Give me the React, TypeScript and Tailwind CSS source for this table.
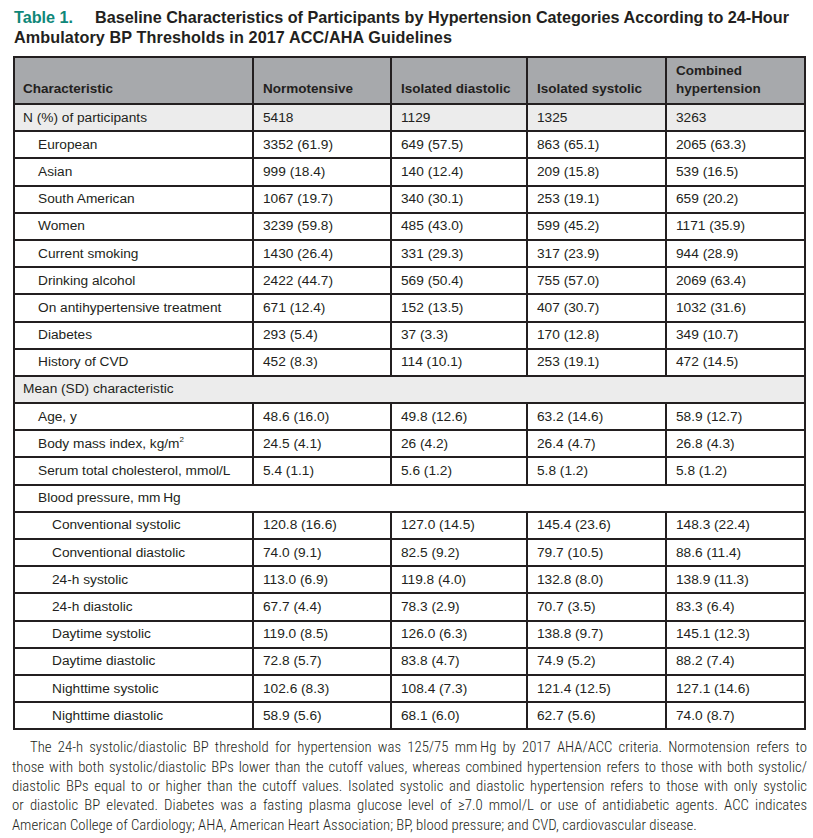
import React from "react";

type Row =
  | { kind: "data"; label: string; level: 0 | 1 | 2; vals: string[]; shade?: boolean }
  | { kind: "span"; label: string; level: 0 | 1 | 2; shade?: boolean };

const rows: Row[] = [
  { kind: "data", label: "N (%) of participants", level: 0, vals: ["5418", "1129", "1325", "3263"], shade: true },
  { kind: "data", label: "European", level: 1, vals: ["3352 (61.9)", "649 (57.5)", "863 (65.1)", "2065 (63.3)"] },
  { kind: "data", label: "Asian", level: 1, vals: ["999 (18.4)", "140 (12.4)", "209 (15.8)", "539 (16.5)"] },
  { kind: "data", label: "South American", level: 1, vals: ["1067 (19.7)", "340 (30.1)", "253 (19.1)", "659 (20.2)"] },
  { kind: "data", label: "Women", level: 1, vals: ["3239 (59.8)", "485 (43.0)", "599 (45.2)", "1171 (35.9)"] },
  { kind: "data", label: "Current smoking", level: 1, vals: ["1430 (26.4)", "331 (29.3)", "317 (23.9)", "944 (28.9)"] },
  { kind: "data", label: "Drinking alcohol", level: 1, vals: ["2422 (44.7)", "569 (50.4)", "755 (57.0)", "2069 (63.4)"] },
  { kind: "data", label: "On antihypertensive treatment", level: 1, vals: ["671 (12.4)", "152 (13.5)", "407 (30.7)", "1032 (31.6)"] },
  { kind: "data", label: "Diabetes", level: 1, vals: ["293 (5.4)", "37 (3.3)", "170 (12.8)", "349 (10.7)"] },
  { kind: "data", label: "History of CVD", level: 1, vals: ["452 (8.3)", "114 (10.1)", "253 (19.1)", "472 (14.5)"] },
  { kind: "span", label: "Mean (SD) characteristic", level: 0, shade: true },
  { kind: "data", label: "Age, y", level: 1, vals: ["48.6 (16.0)", "49.8 (12.6)", "63.2 (14.6)", "58.9 (12.7)"] },
  { kind: "data", label: "BMI", level: 1, vals: ["24.5 (4.1)", "26 (4.2)", "26.4 (4.7)", "26.8 (4.3)"] },
  { kind: "data", label: "Serum total cholesterol, mmol/L", level: 1, vals: ["5.4 (1.1)", "5.6 (1.2)", "5.8 (1.2)", "5.8 (1.2)"] },
  { kind: "span", label: "Blood pressure, mm\u2009Hg", level: 1 },
  { kind: "data", label: "Conventional systolic", level: 2, vals: ["120.8 (16.6)", "127.0 (14.5)", "145.4 (23.6)", "148.3 (22.4)"] },
  { kind: "data", label: "Conventional diastolic", level: 2, vals: ["74.0 (9.1)", "82.5 (9.2)", "79.7 (10.5)", "88.6 (11.4)"] },
  { kind: "data", label: "24-h systolic", level: 2, vals: ["113.0 (6.9)", "119.8 (4.0)", "132.8 (8.0)", "138.9 (11.3)"] },
  { kind: "data", label: "24-h diastolic", level: 2, vals: ["67.7 (4.4)", "78.3 (2.9)", "70.7 (3.5)", "83.3 (6.4)"] },
  { kind: "data", label: "Daytime systolic", level: 2, vals: ["119.0 (8.5)", "126.0 (6.3)", "138.8 (9.7)", "145.1 (12.3)"] },
  { kind: "data", label: "Daytime diastolic", level: 2, vals: ["72.8 (5.7)", "83.8 (4.7)", "74.9 (5.2)", "88.2 (7.4)"] },
  { kind: "data", label: "Nighttime systolic", level: 2, vals: ["102.6 (8.3)", "108.4 (7.3)", "121.4 (12.5)", "127.1 (14.6)"] },
  { kind: "data", label: "Nighttime diastolic", level: 2, vals: ["58.9 (5.6)", "68.1 (6.0)", "62.7 (5.6)", "74.0 (8.7)"] },
];

function Label({ r }: { r: Row }) {
  if (r.label === "BMI") {
    return (
      <>
        Body mass index, kg/m<sup className="text-[8px] -top-[6px]">2</sup>
      </>
    );
  }
  return <>{r.label}</>;
}

const padFor = (level: number) =>
  level === 0 ? "pl-[8px]" : level === 1 ? "pl-[23px]" : "pl-[37px]";

const foot = [
  "The 24-h systolic/diastolic BP threshold for hypertension was 125/75 mm\u2009Hg by 2017 AHA/ACC criteria. Normotension refers to",
  "those with both systolic/diastolic BPs lower than the cutoff values, whereas combined hypertension refers to those with both systolic/",
  "diastolic BPs equal to or higher than the cutoff values. Isolated systolic and diastolic hypertension refers to those with only systolic",
  "or diastolic BP elevated. Diabetes was a fasting plasma glucose level of \u22657.0 mmol/L or use of antidiabetic agents. ACC indicates",
];

const th =
  "border-2 border-[#231f20] align-bottom text-left font-bold pb-[5px] leading-[18px]";
const td = "h-[27.2px] border-2 border-[#231f20] align-middle leading-[16px] whitespace-nowrap";

export default function App() {
  return (
    <div className="w-[813px] h-[838px] bg-white text-[#231f20] overflow-hidden font-['Liberation_Sans',Arial,sans-serif]">
      <div className="pl-[14px] pt-[7px] text-[16.2px] leading-[20px] font-bold whitespace-nowrap">
        <span className="text-[#0f8779] mr-[22px]">Table 1.</span>
        Baseline Characteristics of Participants by Hypertension Categories According to 24-Hour
        <br />
        <span className="tracking-[0.1px]">Ambulatory BP Thresholds in 2017 ACC/AHA Guidelines</span>
      </div>

      <table className="mt-[9px] ml-[13px] w-[793px] border-collapse table-fixed">
        <colgroup>
          <col className="w-[239px]" />
          <col className="w-[138px]" />
          <col className="w-[136px]" />
          <col className="w-[139px]" />
          <col className="w-[139px]" />
        </colgroup>
        <thead className="text-[13.5px]">
          <tr className="bg-[#a7a9ac]">
            <th className={`h-[47px] pl-[8px] ${th}`}>Characteristic</th>
            <th className={`pl-[9px] ${th}`}>Normotensive</th>
            <th className={`pl-[9px] ${th}`}>Isolated diastolic</th>
            <th className={`pl-[9px] ${th}`}>Isolated systolic</th>
            <th className={`pl-[9px] ${th}`}>
              Combined
              <br />
              hypertension
            </th>
          </tr>
        </thead>
        <tbody className="text-[13.7px]">
          {rows.map((r, i) => (
            <tr key={i} className={r.shade ? "bg-[#ececec]" : "bg-white"}>
              {r.kind === "span" ? (
                <td colSpan={5} className={`${td} ${padFor(r.level)}`}>
                  <Label r={r} />
                </td>
              ) : (
                <>
                  <td className={`${td} ${padFor(r.level)}`}>
                    <Label r={r} />
                  </td>
                  {r.vals.map((v, j) => (
                    <td key={j} className={`${td} pl-[9px]`}>
                      {v}
                    </td>
                  ))}
                </>
              )}
            </tr>
          ))}
        </tbody>
      </table>

      <div className="mt-[8px] pl-[12px] pr-[6px] text-[14.8px] leading-[19.3px] font-light text-[#231f20] font-['Roboto_Condensed','Liberation_Sans',sans-serif]">
        {foot.map((l, i) => (
          <div
            key={i}
            className={`text-justify [text-align-last:justify] whitespace-nowrap ${i === 0 ? "pl-[18px]" : ""}`}
          >
            {l}
          </div>
        ))}
        <div className="whitespace-nowrap">
          American College of Cardiology; AHA, American Heart Association; BP, blood pressure; and CVD, cardiovascular disease.
        </div>
      </div>
    </div>
  );
}
